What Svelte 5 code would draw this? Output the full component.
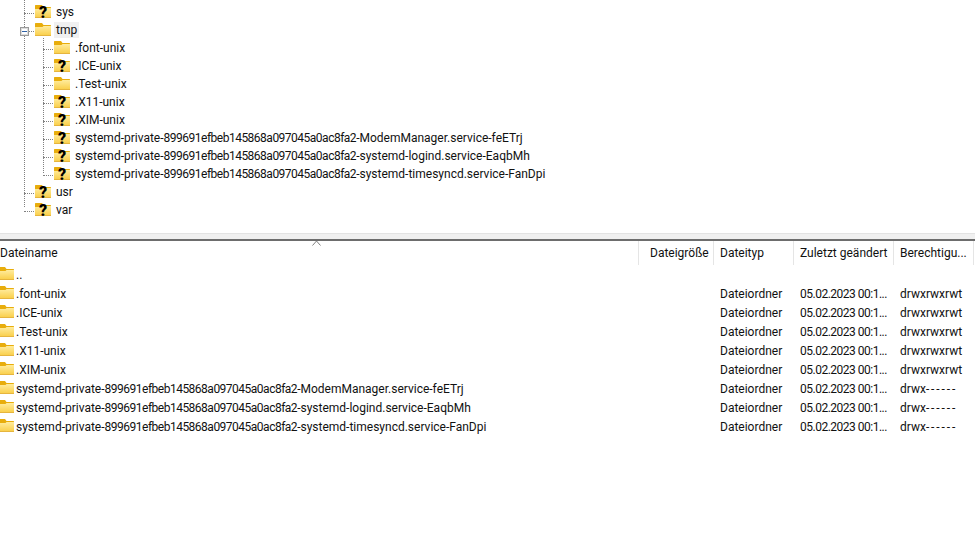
<script>
	const subdirs = [
		{ name: '.font-unix', unknown: false },
		{ name: '.ICE-unix', unknown: true },
		{ name: '.Test-unix', unknown: false },
		{ name: '.X11-unix', unknown: true },
		{ name: '.XIM-unix', unknown: true },
		{ name: 'systemd-private-899691efbeb145868a097045a0ac8fa2-ModemManager.service-feETrj', unknown: true },
		{ name: 'systemd-private-899691efbeb145868a097045a0ac8fa2-systemd-logind.service-EaqbMh', unknown: true },
		{ name: 'systemd-private-899691efbeb145868a097045a0ac8fa2-systemd-timesyncd.service-FanDpi', unknown: true }
	];

	const sticky = { perm: 'drwxrwxrwt', dashes: '' };
	const priv = { perm: 'drwx', dashes: '------' };
	const files = subdirs.map((d) => ({ name: d.name, ...(d.name.startsWith('.') ? sticky : priv) }));

	// Roboto's digits run wider than the original font, so the hash gets tightened
	const hashRe = /^(systemd-private-)([0-9a-f]{32})(.*)$/;
</script>

{#snippet folder(unknown)}
	<svg class="folder" viewBox="0 0 16 14" width="16" height="14" aria-hidden="true">
		<defs>
			<linearGradient id="fold" x1="0" y1="0" x2="0" y2="1">
				<stop offset="0" stop-color="#ffec9e" />
				<stop offset="1" stop-color="#f9cd45" />
			</linearGradient>
		</defs>
		<path d="M0 .5 .5 0h6.500l1.500 2h7l.5.5V4H0z" fill="#e8ad0c" />
		<path d="M0 4h7.500l1-1H16v9.500l-.5.5H.5L0 12.500z" fill="url(#fold)" />
		<path d="M0 12.500h16" stroke="#e6b53e" stroke-width="1" />
		{#if unknown}
			<text x="8" y="12.500" class="q">?</text>
		{/if}
	</svg>
{/snippet}

{#snippet fname(name)}
	{@const m = name.match(hashRe)}
	{#if m}
		<span class="label-text">{m[1]}<span class="tight">{m[2]}</span>{m[3]}</span>
	{:else}
		<span class="label-text">{name}</span>
	{/if}
{/snippet}

<div class="page">
	<div class="tree">
		<span class="vline outer"></span>
		<div class="row lvl1"><span class="hdash"></span>{@render folder(true)}<span class="label">sys</span></div>
		<div class="row lvl1">
			<span class="hdash"></span>
			<span class="toggle"></span>
			{@render folder(false)}<span class="label current">tmp</span>
		</div>
		<div class="children">
			<span class="vline inner"></span>
			{#each subdirs as dir}
				<div class="row lvl2"><span class="hdash"></span>{@render folder(dir.unknown)}<span class="label">{@render fname(dir.name)}</span></div>
			{/each}
		</div>
		<div class="row lvl1"><span class="hdash"></span>{@render folder(true)}<span class="label">usr</span></div>
		<div class="row lvl1"><span class="hdash"></span>{@render folder(true)}<span class="label">var</span></div>
	</div>

	<div class="splitter"></div>

	<div class="list">
		<div class="head">
			<svg class="sort" viewBox="0 0 9 6" width="9" height="6" aria-hidden="true">
				<path d="M.5 5.500 4.500 1l4 4.500" fill="none" stroke="#808080" stroke-width="1" />
			</svg>
			<div class="col c-name">Dateiname</div>
			<div class="col c-size">Dateigröße</div>
			<div class="col c-type">Dateityp</div>
			<div class="col c-date">Zuletzt geändert</div>
			<div class="col c-perm">Berechtigu...</div>
		</div>
		<div class="line">
			<div class="c-name name">{@render folder(false)}<span>..</span></div>
		</div>
		{#each files as f}
			<div class="line">
				<div class="c-name name">{@render folder(false)}{@render fname(f.name)}</div>
				<div class="c-size"></div>
				<div class="c-type cell">Dateiordner</div>
				<div class="c-date cell"><span class="tight">05.02.2023 00:1...</span></div>
				<div class="c-perm cell">{f.perm}<span class="dashes">{f.dashes}</span></div>
			</div>
		{/each}
	</div>
</div>

<style>
	:global(body) {
		margin: 0;
		background: #fff;
	}
	.page {
		width: 975px;
		height: 538px;
		overflow: hidden;
		font-family: Roboto, 'Noto Sans', sans-serif;
		font-size: 12px;
		color: #111;
		background: #fff;
	}
	.tree {
		position: relative;
		height: 233px;
		padding-top: 3px;
		box-sizing: border-box;
	}
	.children {
		position: relative;
	}
	.row {
		position: relative;
		display: flex;
		align-items: center;
		height: 18px;
		white-space: nowrap;
	}
	.lvl1 {
		padding-left: 35px;
	}
	.lvl2 {
		padding-left: 54px;
	}
	.folder {
		flex: none;
		display: block;
		overflow: visible;
	}
	.q {
		font-family: Roboto, sans-serif;
		font-size: 16px;
		font-weight: 900;
		fill: #000;
		text-anchor: middle;
	}
	.tight {
		letter-spacing: -0.5px;
	}
	.dashes {
		letter-spacing: 1.9px;
	}
	.label {
		margin-left: 3px;
		padding: 0 2px;
		line-height: 16px;
	}
	.current {
		background: #f0f0f0;
	}
	.vline {
		position: absolute;
		width: 0;
		border-left: 1px dotted #808080;
	}
	.outer {
		left: 24px;
		top: 0;
		height: 207px;
	}
	.inner {
		left: 43px;
		top: -1px;
		height: 135px;
	}
	.hdash {
		position: absolute;
		top: 10px;
		width: 10px;
		border-top: 1px dotted #808080;
	}
	.lvl1 .hdash {
		left: 24px;
	}
	.lvl2 .hdash {
		left: 43px;
	}
	.toggle {
		position: absolute;
		left: 20px;
		top: 6px;
		width: 7px;
		height: 7px;
		border: 1px solid #9a9a9a;
		background: #fff;
		box-shadow: inset 0 0 0 1px #dcdcdc;
	}
	.toggle::after {
		content: '';
		position: absolute;
		left: 1px;
		top: 3px;
		width: 5px;
		height: 1px;
		background: #2f62a8;
	}
	.splitter {
		background: #f0f0f0;
		border-top: 1px solid #e3e3e3;
		border-bottom: 2px solid #6d6d6d;
		box-sizing: border-box;
		height: 8px;
	}
	.head {
		position: relative;
		display: flex;
		height: 24px;
		align-items: stretch;
	}
	.head .col {
		display: flex;
		align-items: center;
		box-sizing: border-box;
		border-right: 1px solid #e5e5e5;
		padding-left: 6px;
		height: 24px;
	}
	.head .c-name {
		padding-left: 0;
	}
	.sort {
		position: absolute;
		left: 312px;
		top: -1px;
	}
	.c-name {
		width: 639px;
		flex: none;
	}
	.c-size {
		width: 75px;
		flex: none;
		box-sizing: border-box;
	}
	.c-type {
		width: 80px;
		flex: none;
		box-sizing: border-box;
	}
	.c-date {
		width: 100px;
		flex: none;
		box-sizing: border-box;
	}
	.c-perm {
		width: 80px;
		flex: none;
		box-sizing: border-box;
	}
	.head .c-size {
		padding-left: 11px;
	}
	.line {
		display: flex;
		height: 19px;
		align-items: center;
		white-space: nowrap;
	}
	.name {
		display: flex;
		align-items: center;
		margin-left: -2px;
		padding-right: 2px;
		box-sizing: content-box;
		width: 639px;
		gap: 2px;
	}
	.name .folder {
		margin-bottom: 1px;
	}
	.cell {
		padding-left: 6px;
	}
</style>
